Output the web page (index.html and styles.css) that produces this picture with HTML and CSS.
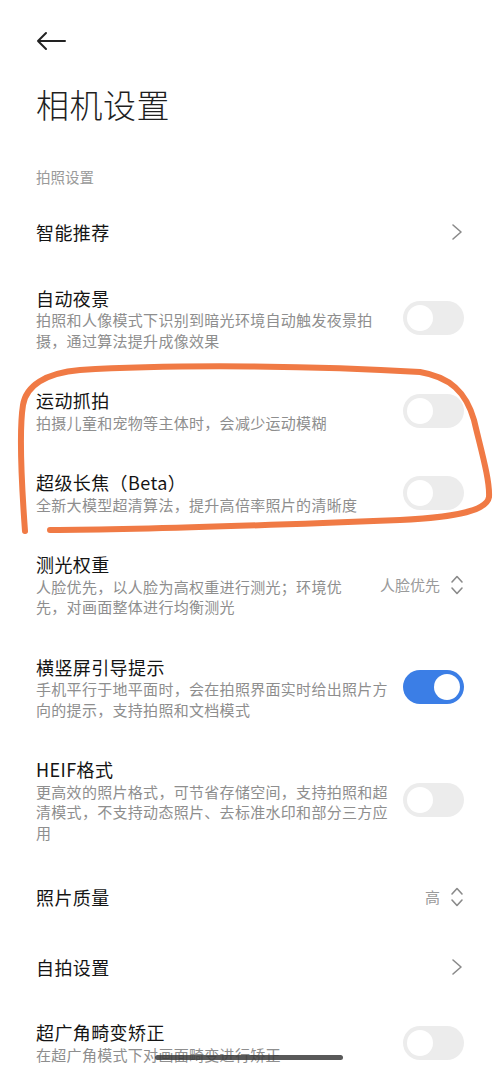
FILE: index.html
```html
<!DOCTYPE html>
<html lang="zh-CN">
<head>
<meta charset="utf-8">
<title>相机设置</title>
<link rel="stylesheet" href="styles.css">
</head>
<body>
<div class="page">
  <div class="topbar">
    <svg class="back" width="30" height="20" viewBox="0 0 30 20"><path d="M29 10H2M10 2L2 10L10 18" fill="none" stroke="#222" stroke-width="2" stroke-linecap="round" stroke-linejoin="round"/></svg>
  </div>
  <h1 class="title">相机设置</h1>
  <div class="section">拍照设置</div>

  <div class="list">
    <div class="row single">
      <div class="text"><div class="name">智能推荐</div></div>
      <svg class="chev" width="12" height="18" viewBox="0 0 12 18"><path d="M2 2L10 9L2 16" fill="none" stroke="#8a8a8a" stroke-width="1.6" stroke-linecap="round" stroke-linejoin="round"/></svg>
    </div>

    <div class="row">
      <div class="text">
        <div class="name">自动夜景</div>
        <div class="desc">拍照和人像模式下识别到暗光环境自动触发夜景拍摄，通过算法提升成像效果</div>
      </div>
      <div class="toggle"><span class="knob"></span></div>
    </div>

    <div class="row">
      <div class="text">
        <div class="name">运动抓拍</div>
        <div class="desc">拍摄儿童和宠物等主体时，会减少运动模糊</div>
      </div>
      <div class="toggle"><span class="knob"></span></div>
    </div>

    <div class="row">
      <div class="text">
        <div class="name">超级长焦（Beta）</div>
        <div class="desc">全新大模型超清算法，提升高倍率照片的清晰度</div>
      </div>
      <div class="toggle"><span class="knob"></span></div>
    </div>

    <div class="row">
      <div class="text">
        <div class="name">测光权重</div>
        <div class="desc">人脸优先，以人脸为高权重进行测光；环境优先，对画面整体进行均衡测光</div>
      </div>
      <div class="select">
        <span class="value">人脸优先</span>
        <svg width="14" height="24" viewBox="0 0 14 24"><path d="M2 9L7 3.5L12 9M2 15L7 20.5L12 15" fill="none" stroke="#8a8a8a" stroke-width="1.6" stroke-linecap="round" stroke-linejoin="round"/></svg>
      </div>
    </div>

    <div class="row">
      <div class="text">
        <div class="name">横竖屏引导提示</div>
        <div class="desc">手机平行于地平面时，会在拍照界面实时给出照片方向的提示，支持拍照和文档模式</div>
      </div>
      <div class="toggle on"><span class="knob"></span></div>
    </div>

    <div class="row">
      <div class="text">
        <div class="name">HEIF格式</div>
        <div class="desc">更高效的照片格式，可节省存储空间，支持拍照和超清模式，不支持动态照片、去标准水印和部分三方应用</div>
      </div>
      <div class="toggle"><span class="knob"></span></div>
    </div>

    <div class="row single">
      <div class="text"><div class="name">照片质量</div></div>
      <div class="select">
        <span class="value">高</span>
        <svg width="14" height="24" viewBox="0 0 14 24"><path d="M2 9L7 3.5L12 9M2 15L7 20.5L12 15" fill="none" stroke="#8a8a8a" stroke-width="1.6" stroke-linecap="round" stroke-linejoin="round"/></svg>
      </div>
    </div>

    <div class="row single">
      <div class="text"><div class="name">自拍设置</div></div>
      <svg class="chev" width="12" height="18" viewBox="0 0 12 18"><path d="M2 2L10 9L2 16" fill="none" stroke="#8a8a8a" stroke-width="1.6" stroke-linecap="round" stroke-linejoin="round"/></svg>
    </div>

    <div class="row">
      <div class="text">
        <div class="name">超广角畸变矫正</div>
        <div class="desc">在超广角模式下对画面畸变进行矫正</div>
      </div>
      <div class="toggle"><span class="knob"></span></div>
    </div>
  </div>

  <svg class="scribble" width="500" height="1065" viewBox="0 0 500 1065">
    <path d="M25 531 C22 490, 19 430, 23 405 C26 386, 45 373, 80 370 C180 364, 320 366, 420 372 C450 377, 466 392, 474 420 C481 450, 490 480, 489 497 C487 510, 460 517, 400 520 C300 524, 150 530, 50 530" fill="none" stroke="#F07A45" stroke-width="6" stroke-linecap="round" stroke-linejoin="round"/>
  </svg>
  <div class="homebar"></div>
</div>
</body>
</html>
```

FILE: styles.css
```css
html, body {
  margin: 0;
  padding: 0;
  background: #ffffff;
}
body {
  font-family: "Noto Sans CJK SC", "Noto Sans", sans-serif;
  color: #1a1a1a;
}
.page {
  position: relative;
  width: 500px;
  height: 1065px;
  overflow: hidden;
}
.topbar {
  padding: 31px 36px 0;
  height: 20px;
}
.back {
  display: block;
}
.title {
  margin: 31px 0 0;
  padding: 0 36px;
  font-size: 33px;
  line-height: 44px;
  font-weight: 300;
  letter-spacing: 0.5px;
  color: #1f1f1f;
}
.section {
  margin-top: 41px;
  padding: 0 36px;
  font-size: 14.5px;
  line-height: 20px;
  color: #9a9a9a;
}
.list {
  margin-top: 10px;
}
.row {
  display: flex;
  align-items: center;
  gap: 12px;
  padding: 18.5px 36px;
}
.row.single {
  padding: 23px 36px;
}
.text {
  flex: 1;
  min-width: 0;
}
.name {
  font-size: 18px;
  line-height: 24px;
  letter-spacing: 0.4px;
  font-weight: 400;
  color: #141414;
}
.desc {
  font-size: 15px;
  line-height: 20.5px;
  letter-spacing: 0.3px;
  color: #8e8e8e;
  margin-top: 0.5px;
}
.chev {
  flex: none;
  margin-right: 1px;
}
.toggle {
  flex: none;
  position: relative;
  width: 61px;
  height: 34px;
  border-radius: 17px;
  background: #ececec;
}
.toggle .knob {
  position: absolute;
  top: 4px;
  left: 4px;
  width: 26px;
  height: 26px;
  border-radius: 50%;
  background: #ffffff;
}
.toggle.on {
  background: #3b7ee6;
}
.toggle.on .knob {
  left: auto;
  right: 4px;
}
.select {
  flex: none;
  display: flex;
  align-items: center;
  gap: 10px;
}
.select .value {
  font-size: 15px;
  line-height: 20px;
  color: #9a9a9a;
}
.select svg {
  display: block;
}
.scribble {
  position: absolute;
  top: 0;
  left: 0;
  pointer-events: none;
}
.homebar {
  position: absolute;
  left: 155px;
  top: 1055px;
  width: 188px;
  height: 5px;
  border-radius: 3px;
  background: rgba(60, 60, 60, 0.85);
}
```
